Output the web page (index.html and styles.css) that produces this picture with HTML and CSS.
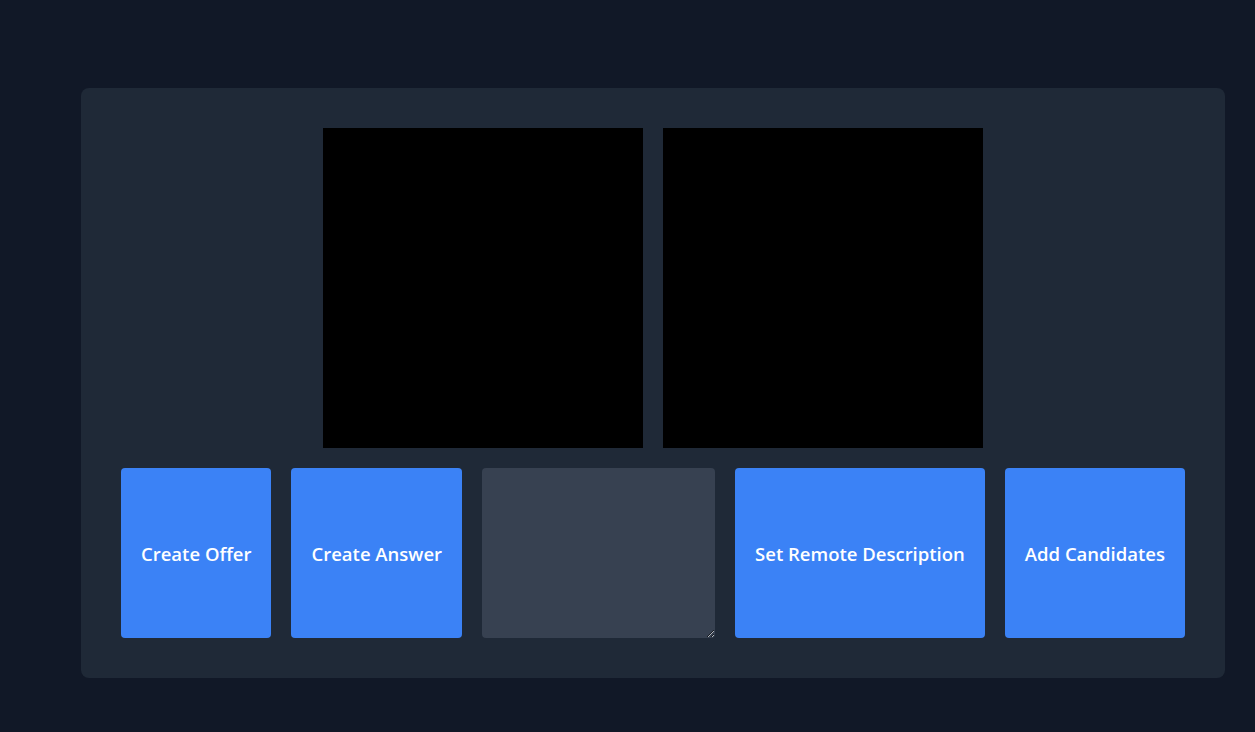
FILE: index.html
```html
<!DOCTYPE html>
<html>
<head>
<meta charset="utf-8">
<link rel="stylesheet" href="styles.css">
</head>
<body>
<main class="card">
  <div class="videos">
    <video class="video"></video>
    <video class="video"></video>
  </div>
  <div class="controls">
    <button class="btn">Create Offer</button>
    <button class="btn">Create Answer</button>
    <textarea class="sdp"></textarea>
    <button class="btn">Set Remote Description</button>
    <button class="btn">Add Candidates</button>
  </div>
</main>
</body>
</html>
```
FILE: styles.css
```css
html, body {
  margin: 0;
  background: #111827;
  height: 100%;
}
body {
  padding: 88px 30px 0 81px;
  box-sizing: border-box;
  font-family: "Open Sans", "Noto Sans", sans-serif;
}
.card {
  background: #1f2937;
  border-radius: 8px;
  padding: 40px;
  display: flex;
  flex-direction: column;
  gap: 20px;
}
.videos {
  display: flex;
  justify-content: center;
  gap: 20px;
}
.video {
  width: 320px;
  height: 320px;
  background: #000;
  display: block;
}
.controls {
  display: flex;
  gap: 20px;
  height: 170px;
}
.btn {
  background: #3b82f6;
  color: #fff;
  border: none;
  border-radius: 4px;
  padding: 0 20px;
  font-family: "Open Sans", "Noto Sans", sans-serif;
  font-weight: 600;
  font-size: 18.5px;
  white-space: nowrap;
}
.sdp {
  flex: 1;
  background: #374151;
  border: none;
  border-radius: 4px;
  color: #fff;
  padding: 8px;
  margin: 0;
}
```
